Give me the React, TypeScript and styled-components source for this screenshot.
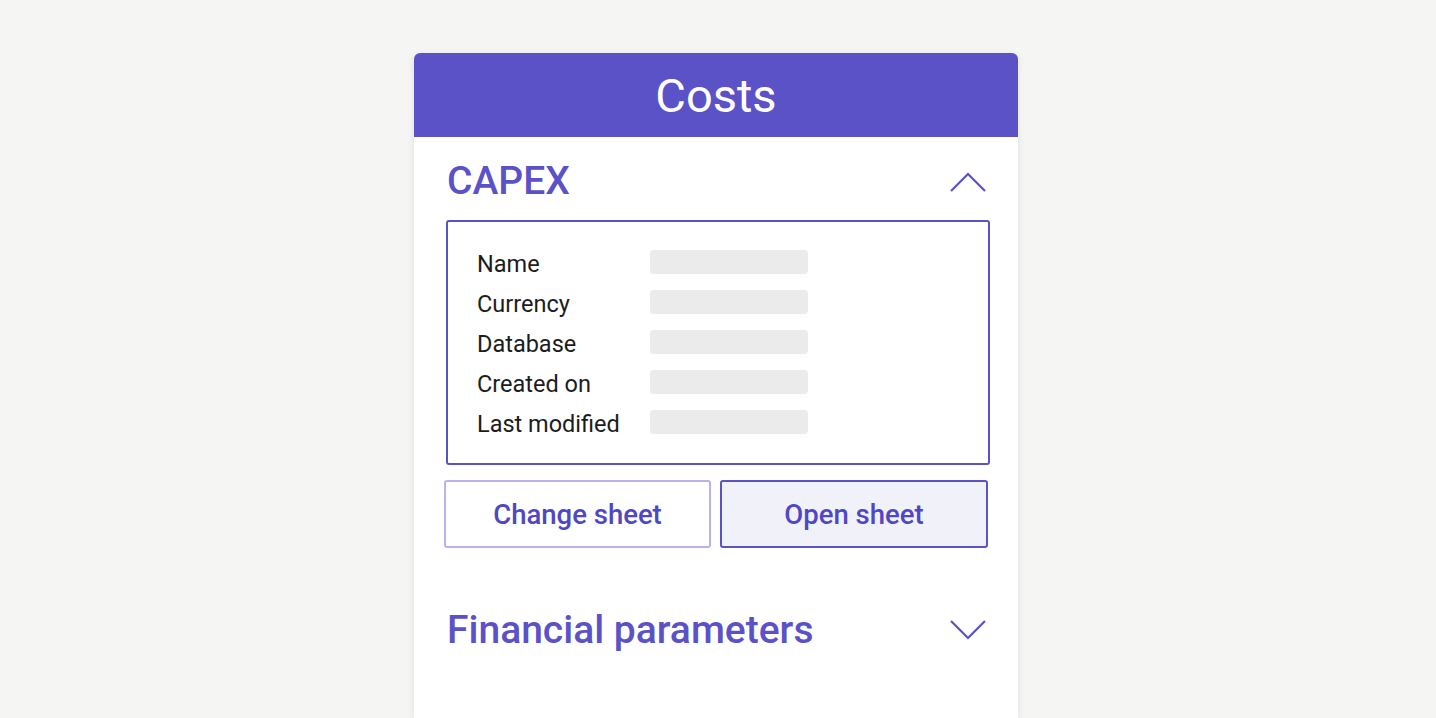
import styled, { createGlobalStyle } from 'styled-components';

const PURPLE = '#5b52c8';

const GlobalStyle = createGlobalStyle`
  html, body {
    margin: 0;
    padding: 0;
    background: #f5f5f4;
    font-family: Roboto, "Noto Sans", Arial, sans-serif;
  }
  * {
    box-sizing: border-box;
  }
`;

const Page = styled.div`
  min-height: 718px;
  display: flex;
  justify-content: center;
  padding-top: 53px;
  padding-right: 4px;
`;

const Panel = styled.div`
  width: 604px;
  min-height: 665px;
  background: #fff;
  border-radius: 6px 6px 0 0;
  box-shadow: 0 2px 8px rgba(0, 0, 0, 0.08);
  overflow: hidden;
`;

const PanelHeader = styled.div`
  height: 84px;
  background: ${PURPLE};
  display: flex;
  align-items: center;
  justify-content: center;
  color: #fff;
  font-size: 47px;
  font-weight: 400;
`;

const Body = styled.div`
  padding: 12px 28px 0 30px;
`;

const SectionHeader = styled.div<{ $spaced?: boolean }>`
  height: 64px;
  display: flex;
  align-items: center;
  justify-content: space-between;
  padding: 0 4px 0 3px;
  margin-top: ${({ $spaced }) => ($spaced ? '50px' : '0')};
`;

const SectionTitle = styled.h2`
  margin: 0;
  color: ${PURPLE};
  font-size: 39px;
  font-weight: 500;
`;

const InfoBox = styled.div`
  margin: 7px 0 0 2px;
  border: 2px solid ${PURPLE};
  border-radius: 3px;
  padding: 21px 0 20px 29px;
`;

const InfoRow = styled.div`
  height: 40px;
  display: flex;
  align-items: center;
`;

const InfoLabel = styled.span`
  width: 173px;
  font-size: 23.5px;
  color: #1c1c1c;
  padding-top: 2px;
`;

const Placeholder = styled.div`
  width: 158px;
  height: 24px;
  border-radius: 4px;
  background: #ebebeb;
  margin-top: -3px;
`;

const ButtonRow = styled.div`
  display: grid;
  grid-template-columns: 267px 268px;
  gap: 9px;
  margin-top: 15px;
`;

const SheetButton = styled.button<{ $primary?: boolean }>`
  height: 68px;
  border: 2px solid ${({ $primary }) => ($primary ? PURPLE : '#b9b2ee')};
  background: ${({ $primary }) => ($primary ? '#f1f1fa' : '#fff')};
  border-radius: 3px;
  color: #5047c4;
  font-family: Roboto, "Noto Sans", Arial, sans-serif;
  font-size: 27.5px;
  font-weight: 500;
  cursor: pointer;
`;

const Chevron = ({ up }: { up?: boolean }) => (
  <svg width="36" height="22" viewBox="0 0 36 22" fill="none">
    <path
      d={up ? 'M1 21 L18 4 L35 21' : 'M1 2 L18 19 L35 2'}
      stroke={PURPLE}
      strokeWidth="2.2"
    />
  </svg>
);

const rows = ['Name', 'Currency', 'Database', 'Created on', 'Last modified'];

export default function App() {
  return (
    <>
      <GlobalStyle />
      <Page>
        <Panel>
          <PanelHeader>Costs</PanelHeader>
          <Body>
            <SectionHeader>
              <SectionTitle>CAPEX</SectionTitle>
              <Chevron up />
            </SectionHeader>
            <InfoBox>
              {rows.map((label) => (
                <InfoRow key={label}>
                  <InfoLabel>{label}</InfoLabel>
                  <Placeholder />
                </InfoRow>
              ))}
            </InfoBox>
            <ButtonRow>
              <SheetButton>Change sheet</SheetButton>
              <SheetButton $primary>Open sheet</SheetButton>
            </ButtonRow>
            <SectionHeader $spaced>
              <SectionTitle>Financial parameters</SectionTitle>
              <Chevron />
            </SectionHeader>
          </Body>
        </Panel>
      </Page>
    </>
  );
}
